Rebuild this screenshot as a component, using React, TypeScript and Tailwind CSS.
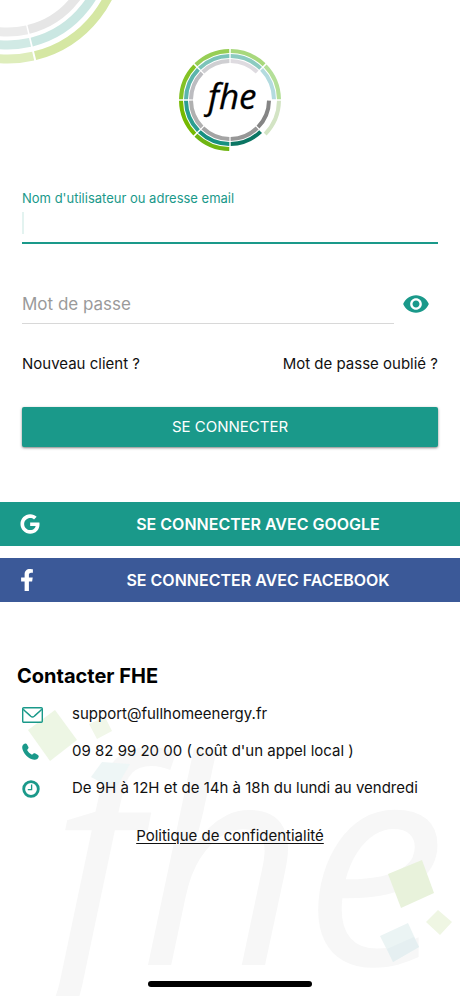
import { useState, type ReactNode } from "react";
import { FaFacebookF, FaGoogle } from "react-icons/fa";
import { MdVisibility } from "react-icons/md";

type Segment = {
  r: number;
  from: number;
  color: string;
};

// Each segment spans 45 degrees, clockwise from twelve o'clock.
const logoSegments: Segment[] = [
  { r: 49, from: 0, color: "#a8d87c" },
  { r: 49, from: 45, color: "#b4df98" },
  { r: 49, from: 90, color: "#d3e4c4" },
  { r: 49, from: 180, color: "#6fb512" },
  { r: 49, from: 225, color: "#76b900" },
  { r: 49, from: 270, color: "#84c225" },
  { r: 49, from: 315, color: "#97ce55" },
  { r: 44, from: 0, color: "#8ccbc0" },
  { r: 44, from: 45, color: "#b3dbdf" },
  { r: 44, from: 135, color: "#0b7563" },
  { r: 44, from: 180, color: "#179080" },
  { r: 44, from: 225, color: "#2a9e90" },
  { r: 44, from: 270, color: "#5bb5ab" },
  { r: 44, from: 315, color: "#7cc4b9" },
  { r: 39, from: 0, color: "#dedbe0" },
  { r: 39, from: 90, color: "#858585" },
  { r: 39, from: 135, color: "#979797" },
  { r: 39, from: 180, color: "#a4a4a4" },
  { r: 39, from: 225, color: "#b0b0b0" },
  { r: 39, from: 270, color: "#bcbcc0" },
  { r: 39, from: 315, color: "#cfcfd2" },
];

function arc(r: number, from: number, to: number) {
  const point = (deg: number) => {
    const a = ((deg - 90) * Math.PI) / 180;
    return `${(r * Math.cos(a)).toFixed(2)} ${(r * Math.sin(a)).toFixed(2)}`;
  };
  return `M${point(from)}A${r} ${r} 0 0 1 ${point(to)}`;
}

function Logo() {
  return (
    <svg width="104" height="104" viewBox="-52 -52 104 104" role="img" aria-label="fhe">
      {logoSegments.map((s) => (
        <path
          key={`${s.r}-${s.from}`}
          d={arc(s.r, s.from + 0.9, s.from + 44.1)}
          fill="none"
          stroke={s.color}
          strokeWidth="4"
        />
      ))}
      <text
        x="-22"
        y="9"
        fontSize="35"
        fontStyle="italic"
        stroke="#000"
        strokeWidth="0.3"
        className="font-['Open_Sans',sans-serif]"
      >
        fhe
      </text>
    </svg>
  );
}

function CornerRings() {
  return (
    <svg
      className="pointer-events-none absolute left-0 top-0"
      width="120"
      height="70"
      aria-hidden
    >
      <g transform="translate(8 -53)" fill="none" strokeWidth="9">
        <path d={arc(112, 90, 166)} stroke="#d5e7a3" />
        <path d={arc(112, 167, 200)} stroke="#deedbb" />
        <path d={arc(98, 90, 166)} stroke="#cae7e2" />
        <path d={arc(98, 167, 200)} stroke="#d1eae5" />
        <path d={arc(85, 90, 166)} stroke="#e6e6e6" />
        <path d={arc(85, 167, 200)} stroke="#ebebeb" />
      </g>
    </svg>
  );
}

function Watermark() {
  return (
    <svg
      className="pointer-events-none absolute bottom-0 left-0"
      width="460"
      height="300"
      aria-hidden
    >
      <text
        x="51"
        y="269"
        fontSize="285"
        fontStyle="italic"
        fill="#f7f7f7"
        className="font-['Open_Sans',sans-serif]"
      >
        fhe
      </text>
      <path d="M28 34L55 14L77 44L50 65Z" fill="#edf6e4" />
      <path d="M89 28L105 21L112 35L97 43Z" fill="#f1f7e9" />
      <path d="M102 66L130 68L115 94L91 81Z" fill="#eef6f6" />
      <path d="M388 178L422 164L434 197L401 212Z" fill="#e8f2db" />
      <path d="M426 226L438 214L452 226L440 239Z" fill="#eff6e3" />
      <path d="M380 240L408 227L419 251L393 266Z" fill="#ebf4f4" />
      <path d="M387 253L414 241L419 251L393 266Z" fill="#e5eff1" />
    </svg>
  );
}

function MailIcon() {
  return (
    <svg width="21" height="16" viewBox="0 0 21 16" fill="none" stroke="currentColor" strokeWidth="1.4" aria-hidden>
      <rect x="0.7" y="0.7" width="19.6" height="14.6" rx="1" />
      <path d="M1.2 2.2C4 5.2 7 7.4 8.8 9.2Q10.5 10.7 12.2 9.2C14 7.4 17 5.2 19.8 2.2" />
    </svg>
  );
}

function PhoneIcon() {
  return (
    <svg width="17" height="17" viewBox="0 0 16 16" fill="currentColor" aria-hidden>
      <path d="M3.2 0.4C1.2 0.8 0 2.4 0.2 4.6C1 9.8 6.2 15 11.4 15.8C13.6 16 15.2 15 15.7 13C15.8 12.2 15.6 11.8 15 11.3L12.6 9.8C11.8 9.4 11.2 9.5 10.6 10L9.4 11C7.5 10.2 5.5 8.3 4.8 6.6L5.7 5.5C6.2 4.9 6.3 4.3 5.9 3.6L4.6 1.1C4.2 0.5 3.8 0.3 3.2 0.4Z" />
    </svg>
  );
}

function ClockIcon() {
  return (
    <svg width="18" height="18" viewBox="0 0 18 18" fill="none" stroke="currentColor" aria-hidden>
      <circle cx="9" cy="9" r="7.3" strokeWidth="2.8" />
      <path d="M9.6 4.6V9.7H5.8" strokeWidth="1.3" />
    </svg>
  );
}

function ContactRow({ icon, children }: { icon: ReactNode; children: ReactNode }) {
  return (
    <li className="flex h-[37px] items-center">
      <span className="w-[50px] shrink-0 text-[#1a998a]">{icon}</span>
      {children}
    </li>
  );
}

export default function App() {
  const [username, setUsername] = useState("");
  const [password, setPassword] = useState("");
  const [visible, setVisible] = useState(false);

  return (
    <main className="relative flex min-h-screen flex-col overflow-hidden bg-white font-['Inter',sans-serif] text-base text-[#111]">
      <CornerRings />
      <Watermark />

      <div className="relative flex flex-1 flex-col">
        <div className="flex justify-center pt-12">
          <Logo />
        </div>

        <form className="px-[22px] pt-9" onSubmit={(e) => e.preventDefault()}>
          <label htmlFor="username" className="block text-[13px] leading-5 text-[#1a998a]">
            Nom d'utilisateur ou adresse email
          </label>
          <div className="flex h-9 items-end border-b-2 border-[#1a998a] pb-2">
            <span className="h-[22px] w-0.5 bg-[#e3f3f0]" />
            <input
              id="username"
              type="text"
              value={username}
              onChange={(e) => setUsername(e.target.value)}
              className="min-w-0 flex-1 bg-transparent outline-none"
            />
          </div>

          <div className="mt-10 flex items-center">
            <input
              type={visible ? "text" : "password"}
              aria-label="Mot de passe"
              placeholder="Mot de passe"
              value={password}
              onChange={(e) => setPassword(e.target.value)}
              className="h-10 min-w-0 flex-1 border-b border-[#d8d8d8] bg-transparent text-[17px] outline-none placeholder:text-[#9a9a9a]"
            />
            <button
              type="button"
              aria-label="Afficher le mot de passe"
              onClick={() => setVisible(!visible)}
              className="flex w-11 justify-center text-[#1a998a]"
            >
              <MdVisibility size={28} />
            </button>
          </div>

          <div className="mt-7 flex justify-between text-[15px] leading-6">
            <a href="#nouveau">Nouveau client ?</a>
            <a href="#oubli">Mot de passe oublié ?</a>
          </div>

          <button
            type="submit"
            className="mt-[31px] h-10 w-full rounded-xs bg-[#1a998a] text-[15px] text-white shadow-sm shadow-black/40"
          >
            SE CONNECTER
          </button>
        </form>

        <div className="mt-[55px] flex flex-col gap-3 text-base font-semibold text-white">
          <button type="button" className="flex h-11 items-center bg-[#1a998a] pl-5">
            <FaGoogle size={20} />
            <span className="flex-1 pl-4">SE CONNECTER AVEC GOOGLE</span>
          </button>
          <button type="button" className="flex h-11 items-center bg-[#3b5998] pl-5">
            <span className="w-5">
              <FaFacebookF className="h-[22px] w-[14px]" />
            </span>
            <span className="flex-1 pl-4">SE CONNECTER AVEC FACEBOOK</span>
          </button>
        </div>

        <section className="px-[17px] pt-[60px]">
          <h2 className="text-xl leading-7 font-bold text-black">Contacter FHE</h2>
          <ul className="mt-[6px] pl-[5px] text-[15px]">
            <ContactRow icon={<MailIcon />}>
              <a href="mailto:support@fullhomeenergy.fr">support@fullhomeenergy.fr</a>
            </ContactRow>
            <ContactRow icon={<PhoneIcon />}>09 82 99 20 00 ( coût d'un appel local )</ContactRow>
            <ContactRow icon={<ClockIcon />}>De 9H à 12H et de 14h à 18h du lundi au vendredi</ContactRow>
          </ul>
          <p className="mt-[17px] text-center text-[15px] leading-6">
            <a href="#confidentialite" className="underline underline-offset-2">
              Politique de confidentialité
            </a>
          </p>
        </section>

        <div className="mx-auto mt-auto mb-[9px] h-[6px] w-[164px] rounded-full bg-black" />
      </div>
    </main>
  );
}
